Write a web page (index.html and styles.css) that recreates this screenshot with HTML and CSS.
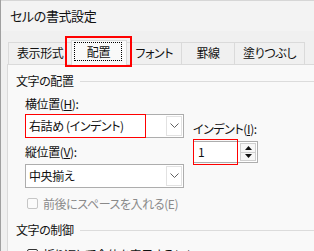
FILE: index.html
```html
<!DOCTYPE html>
<html lang="ja">

<head>
    <meta charset="UTF-8">
    <meta name="viewport" content="width=device-width, initial-scale=1.0">
    <title>セルの書式設定</title>
    <link rel="stylesheet" href="styles.css">
</head>

<body>
    <div class="dialog">
        <div class="titlebar">セルの書式設定</div>

        <div class="tabs">
            <div class="tab">表示形式</div>
            <div class="tab active mark-tab"><span class="focus">配置</span></div>
            <div class="tab">フォント</div>
            <div class="tab">罫線</div>
            <div class="tab">塗りつぶし</div>
        </div>

        <div class="panel">
            <div class="group-head">
                <span>文字の配置</span>
                <i class="rule"></i>
            </div>
            <div class="group-body">
                <div class="align-row">
                    <div class="col-left">
                        <div class="label">横位置(<u>H</u>):</div>
                        <div class="select mark-select">
                            <span class="value">右詰め (インデント)</span>
                            <span class="drop">
                                <svg width="9" height="6" viewBox="0 0 9 6">
                                    <polyline points="0.5,0.5 4.5,4.5 8.5,0.5" fill="none" stroke="#606060" stroke-width="1"/>
                                </svg>
                            </span>
                        </div>
                        <div class="label label-second">縦位置(<u>V</u>):</div>
                        <div class="select select-second">
                            <span class="value">中央揃え</span>
                            <span class="drop">
                                <svg width="9" height="6" viewBox="0 0 9 6">
                                    <polyline points="0.5,0.5 4.5,4.5 8.5,0.5" fill="none" stroke="#606060" stroke-width="1"/>
                                </svg>
                            </span>
                        </div>
                    </div>
                    <div class="col-right">
                        <div class="label">インデント(<u>I</u>):</div>
                        <div class="spin mark-spin">
                            <span class="spin-value">1</span>
                            <span class="spin-btns">
                                <span class="spin-btn">
                                    <svg width="7" height="4" viewBox="0 0 7 4"><polygon points="0,4 3.5,0 7,4" fill="#111"/></svg>
                                </span>
                                <span class="spin-btn">
                                    <svg width="7" height="4" viewBox="0 0 7 4"><polygon points="0,0 3.5,4 7,0" fill="#111"/></svg>
                                </span>
                            </span>
                        </div>
                    </div>
                </div>
                <div class="check disabled">
                    <span class="box"></span>
                    <span>前後にスペースを入れる(E)</span>
                </div>
            </div>

            <div class="group-head group-second">
                <span>文字の制御</span>
                <i class="rule"></i>
            </div>
            <div class="group-body">
                <div class="check">
                    <span class="box"></span>
                    <span>折り返して全体を表示する(<u>W</u>)</span>
                </div>
            </div>
        </div>
    </div>
</body>

</html>
```

FILE: styles.css
```css
* {
    margin: 0px;
    padding: 0px;
    box-sizing: border-box;
}

body {
    width: 314px;
    height: 251px;
    overflow: hidden;
    background: #f0f0f0;
    font-family: "Noto Sans CJK JP", "Noto Sans", sans-serif;
    font-size: 12px;
    font-feature-settings: "palt";
    letter-spacing: -0.4px;
    color: #111;
}

.dialog {
    height: 251px;
    border-left: 1px solid #a0a0a0;
}

.titlebar {
    height: 31px;
    line-height: 30px;
    padding-left: 9px;
    font-size: 13px;
    background: #f3f3f3;
    border-top: 1px solid #d6d6d6;
}

/* tab strip */

.tabs {
    height: 33px;
    padding-left: 7px;
    display: flex;
    align-items: flex-end;
}

.tab {
    height: 22px;
    line-height: 20px;
    min-width: 54px;
    padding: 0 8px;
    margin-right: -1px;
    text-align: center;
    background: #f0f0f0;
    border: 1px solid #dadada;
    border-bottom: none;
}

.tab.active {
    position: relative;
    z-index: 1;
    height: 25px;
    width: 56px;
    min-width: 0;
    margin-bottom: -1px;
    padding: 1px 4px 0 2px;
    background: #f9f9f9;
}

.tab .focus {
    display: block;
    height: 19px;
    line-height: 17px;
    border: 1px dotted #000;
}

.mark-tab::after {
    content: "";
    position: absolute;
    top: -5px;
    left: -7px;
    right: -6px;
    bottom: -2px;
    border: 2px solid #f00;
}

/* page panel */

.panel {
    height: 200px;
    margin-left: 6px;
    background: #f9f9f9;
    border-top: 1px solid #dadada;
    border-left: 1px solid #dadada;
    padding: 7px 0 0 8px;
}

.group-head {
    display: flex;
    align-items: center;
    height: 18px;
    line-height: 18px;
}

.group-head .rule {
    flex: 1;
    margin-left: 6px;
    border-top: 1px solid #dcdcdc;
}

.group-second {
    margin-top: 9px;
}

.group-body {
    padding-left: 9px;
}

.align-row {
    display: flex;
    margin-top: 5px;
}

.col-left {
    flex: none;
    width: 159px;
}

.col-right {
    flex: none;
    margin-left: 9px;
    padding-top: 25px;
}

.label {
    height: 18px;
    line-height: 18px;
}

.label-second {
    margin-top: 5px;
}

.select {
    position: relative;
    display: flex;
    height: 24px;
    margin-top: 1px;
    background: #fff;
    border: 1px solid #adadad;
}

.select-second {
    margin-top: 3px;
}

.select .value {
    flex: 1;
    padding-left: 3px;
    line-height: 21px;
}

.select .drop {
    width: 16px;
    margin: 1px;
    border: 1px solid #e2e2e2;
    display: flex;
    align-items: center;
    justify-content: center;
}

.mark-select::after {
    content: "";
    position: absolute;
    top: -1px;
    left: -1px;
    bottom: -1px;
    width: 119px;
    border: 1px solid #f00;
}

/* indent spinner */

.spin {
    position: relative;
    display: flex;
    width: 65px;
    height: 22px;
    margin-top: 3px;
    background: #fff;
    border: 1px solid #adadad;
}

.spin-value {
    flex: 1;
    padding-left: 4px;
    line-height: 20px;
}

.spin-btns {
    width: 16px;
    margin: 1px;
    display: flex;
    flex-direction: column;
}

.spin-btn {
    flex: 1;
    display: flex;
    align-items: center;
    justify-content: center;
    background: #f7f7f7;
    border: 1px solid #cfcfcf;
}

.spin-btn + .spin-btn {
    border-top: none;
}

.mark-spin::after {
    content: "";
    position: absolute;
    top: -3px;
    left: -1px;
    width: 43px;
    height: 24px;
    border: 1px solid #f00;
}

/* checkboxes */

.check {
    display: flex;
    align-items: center;
    height: 18px;
    margin-top: 6px;
    padding-left: 2px;
}

.check .box {
    flex: none;
    width: 11px;
    height: 11px;
    margin-right: 5px;
    background: #fff;
    border: 1px solid #333;
    border-radius: 2px;
}

.check.disabled {
    color: #8a8a8a;
}

.check.disabled .box {
    background: #fbfbfb;
    border-color: #c6c6c6;
}
```
